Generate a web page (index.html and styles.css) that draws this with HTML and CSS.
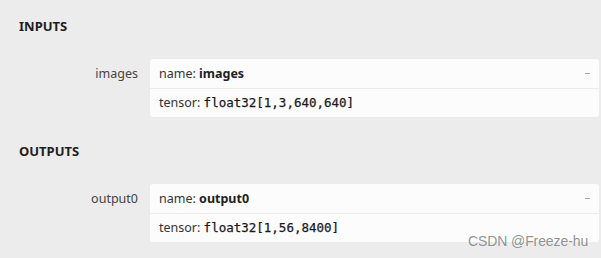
FILE: index.html
```html
<!DOCTYPE html>
<html>
<head>
<meta charset="utf-8">
<link rel="stylesheet" href="styles.css">
</head>
<body>
<div class="page">
  <section class="section">
    <h2 class="title">INPUTS</h2>
    <div class="item">
      <div class="label">images</div>
      <div class="card">
        <div class="row row-name"><span>name: <b>images</b></span><span class="dash"></span></div>
        <div class="row">tensor: <code>float32[1,3,640,640]</code></div>
      </div>
    </div>
  </section>
  <section class="section">
    <h2 class="title">OUTPUTS</h2>
    <div class="item">
      <div class="label">output0</div>
      <div class="card">
        <div class="row row-name"><span>name: <b>output0</b></span><span class="dash"></span></div>
        <div class="row">tensor: <code>float32[1,56,8400]</code></div>
      </div>
    </div>
  </section>
  <div class="watermark">CSDN @Freeze-hu</div>
</div>
</body>
</html>
```
FILE: styles.css
```css
html, body {
  margin: 0;
  padding: 0;
  background: #ececec;
}
body {
  font-family: "Noto Sans", "Open Sans", sans-serif;
  font-size: 12.5px;
  color: #333;
  width: 601px;
  height: 258px;
  overflow: hidden;
}
.page {
  position: relative;
  padding: 18px 2px 0 19px;
}
.section + .section {
  margin-top: 26px;
}
.title {
  margin: 0;
  font-size: 13px;
  font-weight: 700;
  line-height: 16px;
  color: #1e1e1e;
}
.item {
  display: flex;
  margin-top: 25px;
}
.label {
  width: 119px;
  padding-right: 12px;
  text-align: right;
  line-height: 29px;
  color: #444;
}
.card {
  flex: 1;
  background: #fcfcfc;
  border-radius: 3px;
}
.row {
  height: 28px;
  line-height: 28px;
  padding: 0 9px;
  color: #333;
}
.row-name {
  height: 29px;
  line-height: 29px;
  border-bottom: 1px solid #ececec;
  display: flex;
  justify-content: space-between;
  align-items: center;
}
.row-name b {
  color: #222;
}
.dash {
  width: 5px;
  height: 1px;
  background: #aaa;
  margin-right: 0px;
}
code {
  font-family: "DejaVu Sans Mono", monospace;
  font-size: 12.5px;
  font-weight: 400;
  color: #1a1a1a;
  -webkit-text-stroke: 0.25px #1a1a1a;
}
.watermark {
  position: absolute;
  left: 468px;
  top: 233px;
  font-family: "Liberation Sans", Arial, sans-serif;
  font-size: 14px;
  letter-spacing: -0.1px;
  color: rgba(120, 120, 120, 0.8);
}
```
